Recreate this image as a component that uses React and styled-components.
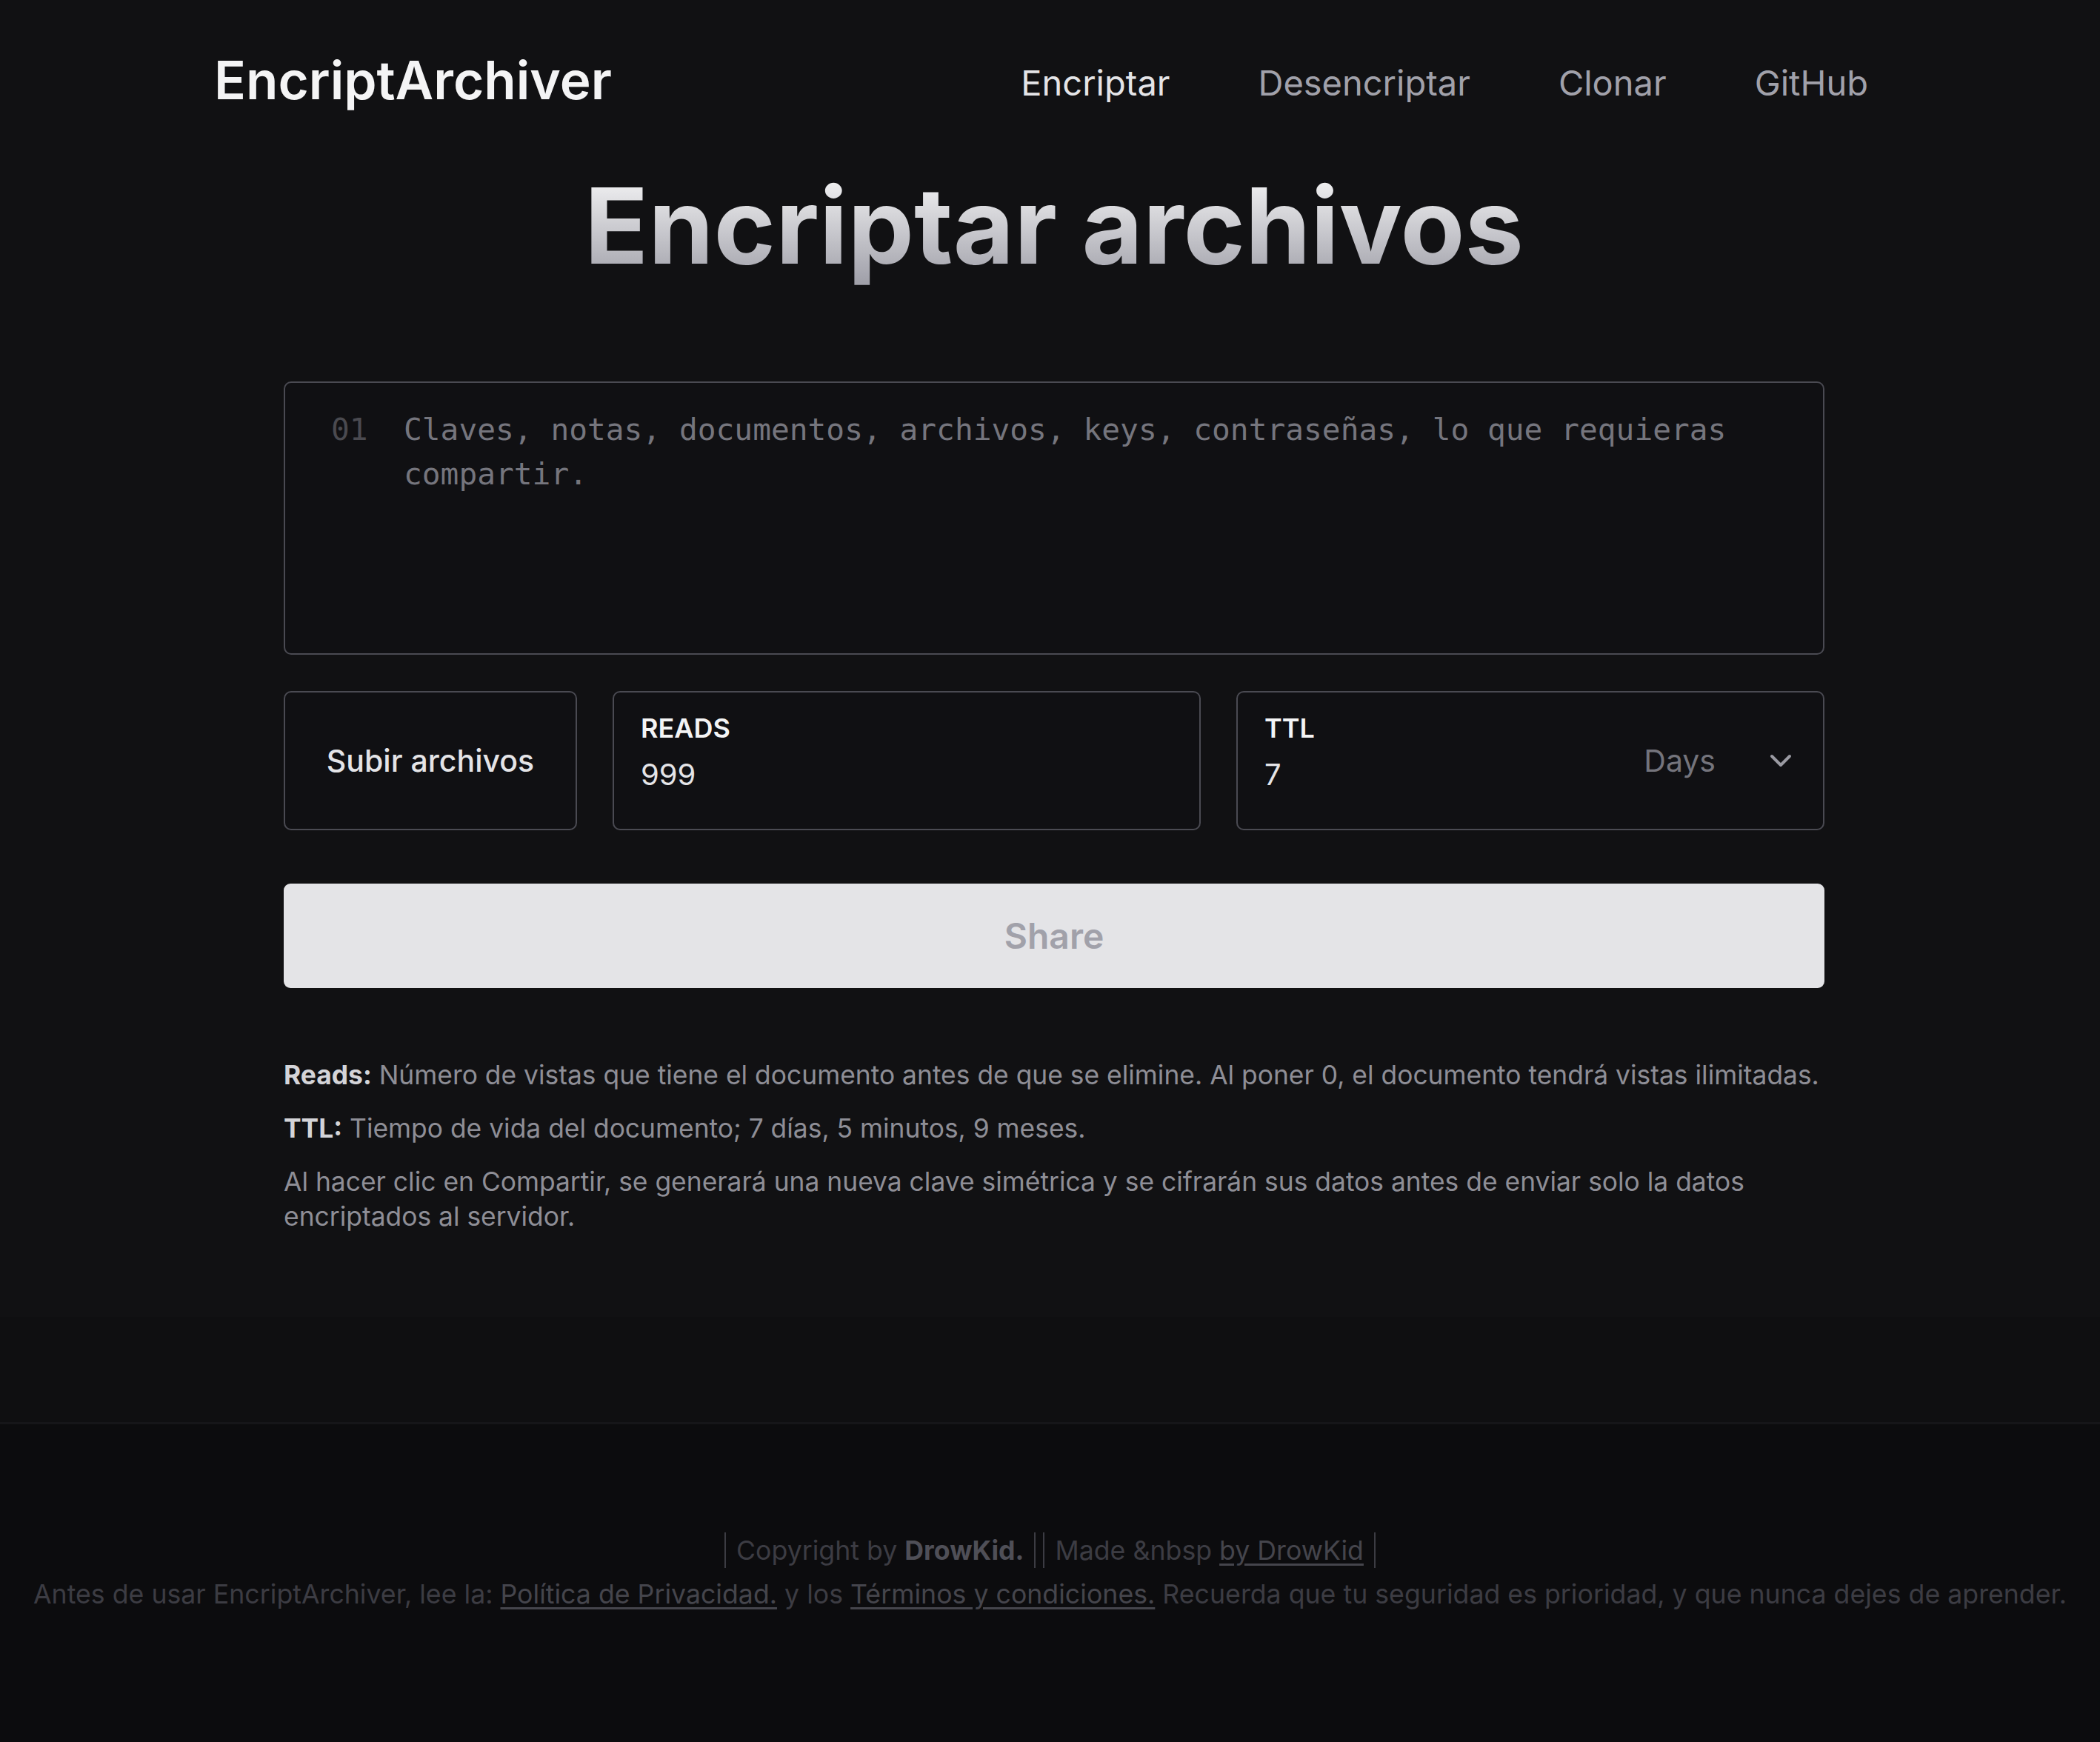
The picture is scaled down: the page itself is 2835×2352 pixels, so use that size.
import React, { useState } from "react";
import styled, { createGlobalStyle } from "styled-components";

const GlobalStyle = createGlobalStyle`
  html, body {
    margin: 0;
    padding: 0;
    background: #0c0c0e;
  }
  body {
    font-family: Inter, "Noto Sans", "Liberation Sans", sans-serif;
    color: #e4e4e7;
  }
  * {
    box-sizing: border-box;
  }
`;

const Page = styled.div`
  display: flex;
  flex-direction: column;
  min-height: 100vh;
  background: #111113;
`;

const Header = styled.header`
  height: 219px;
  padding: 0 313px 0 289px;
  display: flex;
  align-items: flex-start;
  justify-content: space-between;
`;

const Logo = styled.div`
  margin-top: 66px;
  font-size: 71px;
  font-weight: 600;
  line-height: 84px;
  color: #f4f4f5;
`;

const Nav = styled.nav`
  margin-top: 83px;
  display: flex;
  gap: 119px;
`;

const NavLink = styled.a`
  font-size: 47px;
  line-height: 58px;
  color: ${(p) => (p.$active ? "#e4e4e7" : "#a1a1aa")};
  text-decoration: none;
  cursor: pointer;
`;

const Main = styled.main`
  width: 2080px;
  margin: 0 auto;
  padding-left: 11px;
  box-sizing: content-box;
`;

const Title = styled.h1`
  margin: 0;
  text-align: center;
  font-size: 142px;
  line-height: 170px;
  font-weight: 700;
  background: linear-gradient(180deg, #f4f4f5 10%, #a1a1aa 95%);
  -webkit-background-clip: text;
  background-clip: text;
  color: transparent;
`;

const Editor = styled.div`
  margin-top: 126px;
  height: 369px;
  border: 2px solid #4a4a52;
  border-radius: 10px;
  background: #101013;
  padding: 33px 60px 0 62px;
  display: flex;
  font-family: "DejaVu Sans Mono", "Liberation Mono", monospace;
  font-size: 41.2px;
  line-height: 60px;
`;

const Gutter = styled.div`
  width: 98px;
  flex-shrink: 0;
  color: #4a4a50;
`;

const Placeholder = styled.div`
  color: #75757d;
`;

const Controls = styled.div`
  margin-top: 49px;
  display: grid;
  grid-template-columns: 396px 1fr 1fr;
  gap: 48px;
  height: 188px;
`;

const Box = styled.div`
  border: 2px solid #4a4a52;
  border-radius: 10px;
  background: #101013;
`;

const UploadButton = styled(Box).attrs({ as: "button" })`
  font-family: inherit;
  font-size: 41px;
  font-weight: 500;
  color: #e4e4e7;
  cursor: pointer;
`;

const Field = styled(Box)`
  padding: 26px 42px 0 36px;
  display: flex;
  align-items: flex-start;
  justify-content: space-between;
`;

const FieldLabel = styled.div`
  font-size: 36px;
  line-height: 44px;
  font-weight: 600;
  color: #f4f4f5;
`;

const FieldValue = styled.div`
  margin-top: 16px;
  font-size: 40px;
  line-height: 50px;
  color: #e4e4e7;
`;

const UnitSelect = styled.div`
  align-self: center;
  margin-top: -26px;
  display: flex;
  align-items: center;
  gap: 73px;
  font-size: 41px;
  color: #74747c;
`;

const ShareButton = styled.button`
  margin-top: 72px;
  width: 100%;
  height: 141px;
  border: none;
  border-radius: 9px;
  background: #e4e4e7;
  color: #a1a1aa;
  font-family: inherit;
  font-size: 48px;
  font-weight: 600;
  cursor: pointer;
`;

const Help = styled.div`
  margin-top: 94px;
`;

const HelpText = styled.p`
  margin: 0 0 25px;
  font-size: 35.4px;
  line-height: 47px;
  color: #8e8e96;

  b {
    color: #d4d4d8;
    font-weight: 700;
  }
`;

const Footer = styled.footer`
  margin-top: 87px;
  flex: 1;
  background: #0c0c0e;
  text-align: center;
  font-size: 35.7px;
  color: #3c3c43;
`;

const FooterBand = styled.div`
  height: 145px;
  background: #0f0f11;
  border-bottom: 3px solid #161619;
`;

const Credits = styled.div`
  margin-top: 142px;
  line-height: 50px;
`;

const Bar = styled.span`
  display: inline-block;
  vertical-align: middle;
  border-left: 2px solid #3c3c43;
  border-right: 2px solid #3c3c43;
  padding: 0 14px;
  line-height: 48px;

  & + & {
    margin-left: 10px;
  }
`;

const Strong = styled.b`
  color: #4f4f57;
`;

const FooterLink = styled.a`
  color: #45454c;
  text-decoration: underline;
  text-underline-offset: 5px;
`;

const Notice = styled.div`
  margin-top: 10px;
  line-height: 50px;
  padding-bottom: 180px;
`;

function Chevron() {
  return (
    <svg width="30" height="18" viewBox="0 0 30 18" fill="none" stroke="#9a9aa2" strokeWidth="4" strokeLinecap="round" strokeLinejoin="round">
      <path d="M3 3l12 12 12-12" />
    </svg>
  );
}

export default function App() {
  const [reads] = useState(999);
  const [ttl] = useState(7);

  return (
    <Page>
      <GlobalStyle />
      <Header>
        <Logo>EncriptArchiver</Logo>
        <Nav>
          <NavLink $active>Encriptar</NavLink>
          <NavLink>Desencriptar</NavLink>
          <NavLink>Clonar</NavLink>
          <NavLink>GitHub</NavLink>
        </Nav>
      </Header>

      <Main>
        <Title>Encriptar archivos</Title>

        <Editor>
          <Gutter>01</Gutter>
          <Placeholder>
            Claves, notas, documentos, archivos, keys, contraseñas, lo que requieras compartir.
          </Placeholder>
        </Editor>

        <Controls>
          <UploadButton>Subir archivos</UploadButton>
          <Field>
            <div>
              <FieldLabel>READS</FieldLabel>
              <FieldValue>{reads}</FieldValue>
            </div>
          </Field>
          <Field>
            <div>
              <FieldLabel>TTL</FieldLabel>
              <FieldValue>{ttl}</FieldValue>
            </div>
            <UnitSelect>
              Days
              <Chevron />
            </UnitSelect>
          </Field>
        </Controls>

        <ShareButton>Share</ShareButton>

        <Help>
          <HelpText>
            <b>Reads:</b> Número de vistas que tiene el documento antes de que se elimine. Al poner 0, el documento tendrá vistas ilimitadas.
          </HelpText>
          <HelpText>
            <b>TTL:</b> Tiempo de vida del documento; 7 días, 5 minutos, 9 meses.
          </HelpText>
          <HelpText>
            Al hacer clic en Compartir, se generará una nueva clave simétrica y se cifrarán sus datos antes de enviar solo la datos encriptados al servidor.
          </HelpText>
        </Help>
      </Main>

      <Footer>
        <FooterBand />
        <Credits>
          <Bar>
            Copyright by <Strong>DrowKid.</Strong>
          </Bar>
          <Bar>
            {"Made &nbsp "}
            <FooterLink>by DrowKid </FooterLink>
          </Bar>
        </Credits>
        <Notice>
          Antes de usar EncriptArchiver, lee la: <FooterLink>Política de Privacidad.</FooterLink> y los{" "}
          <FooterLink>Términos y condiciones.</FooterLink> Recuerda que tu seguridad es prioridad, y que nunca dejes de aprender.
        </Notice>
      </Footer>
    </Page>
  );
}
